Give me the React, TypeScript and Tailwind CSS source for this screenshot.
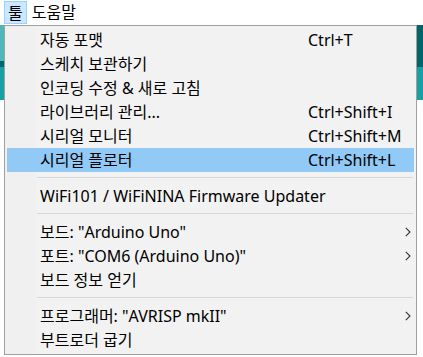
import React from 'react'

type Item =
    | { kind: 'item'; label: string; shortcut?: string; sub?: boolean; active?: boolean }
    | { kind: 'sep' }

const items: Item[] = [
    { kind: 'item', label: '자동 포맷', shortcut: 'Ctrl+T' },
    { kind: 'item', label: '스케치 보관하기' },
    { kind: 'item', label: '인코딩 수정 & 새로 고침' },
    { kind: 'item', label: '라이브러리 관리...', shortcut: 'Ctrl+Shift+I' },
    { kind: 'item', label: '시리얼 모니터', shortcut: 'Ctrl+Shift+M' },
    { kind: 'item', label: '시리얼 플로터', shortcut: 'Ctrl+Shift+L', active: true },
    { kind: 'sep' },
    { kind: 'item', label: 'WiFi101 / WiFiNINA Firmware Updater' },
    { kind: 'sep' },
    { kind: 'item', label: '보드: "Arduino Uno"', sub: true },
    { kind: 'item', label: '포트: "COM6 (Arduino Uno)"', sub: true },
    { kind: 'item', label: '보드 정보 얻기' },
    { kind: 'sep' },
    { kind: 'item', label: '프로그래머: "AVRISP mkII"', sub: true },
    { kind: 'item', label: '부트로더 굽기' },
]

const Chevron = () => (
    <svg width="6" height="10" viewBox="0 0 6 10" className="block">
        <path d="M0.8 0.8 L5 5 L0.8 9.2" fill="none" stroke="#333" strokeWidth="1.1" />
    </svg>
)

const App: React.FC = () =>
{
    return (
        <div
            className="relative w-[423px] h-[357px] overflow-hidden bg-white text-black"
            style={{ fontFamily: '"Noto Sans", "Noto Sans CJK KR", sans-serif' }}
        >
            {/* Menu bar */}
            <div className="h-[25px] flex items-start pt-[1px] pl-[4px] gap-[5px] text-[16px] leading-[22px]">
                <div className="h-[23px] px-[3px] border border-[#99d1ff] bg-[#cce8ff]">툴</div>
                <div>도움말</div>
            </div>

            {/* IDE behind the menu */}
            <div className="h-[42px] bg-[#006468] flex">
                <div className="w-[4px] h-[36px] bg-[#4db7bb]" />
            </div>
            <div className="h-[33px] bg-[#17a1a5]" />
            <div className="h-[257px] bg-white" />

            {/* Dropdown */}
            <div className="absolute left-[4px] top-[25px] w-[413px] h-[330px] border border-[#a0a0a0] bg-[#f2f2f2] py-[2px] text-[16px]">
                <div className="absolute left-0 top-0 bottom-0 w-[31px] bg-[#f0f0f0]" />
                <div className="relative">
                    {items.map((it, i) =>
                        it.kind === 'sep' ? (
                            <div key={i} className="h-[12px] pl-[32px] pr-[3px] pt-[5px]">
                                <div className="h-px bg-[#d7d7d7]" />
                            </div>
                        ) : (
                            <div
                                key={i}
                                className={`mx-[2px] h-[24px] flex items-center pl-[33px] ${it.active ? 'bg-[#91c9f7]' : ''}`}
                            >
                                <div className="w-[268px] whitespace-nowrap">{it.label}</div>
                                <div className="flex-1 whitespace-nowrap">{it.shortcut}</div>
                                {it.sub && (
                                    <div className="w-[9px] flex justify-start">
                                        <Chevron />
                                    </div>
                                )}
                            </div>
                        )
                    )}
                </div>
            </div>
        </div>
    )
}

export default App
